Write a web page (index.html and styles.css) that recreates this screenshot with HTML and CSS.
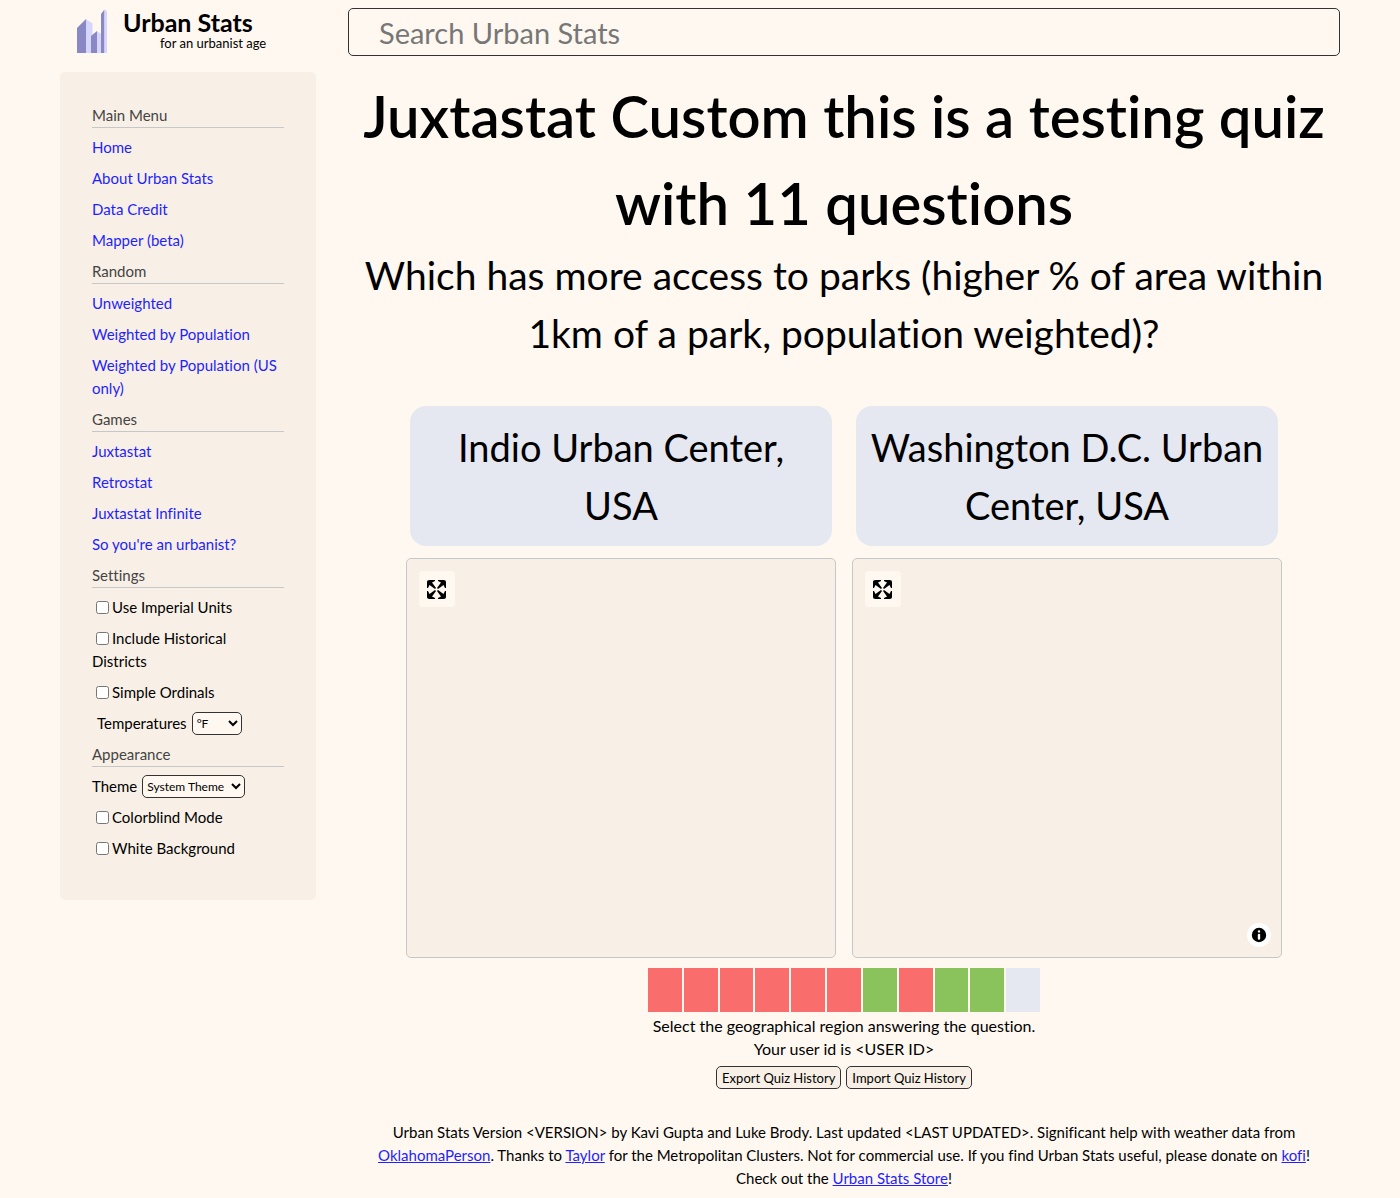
FILE: index.html
```html
<!DOCTYPE html>
<html lang="en">
<head>
<meta charset="utf-8">
<meta name="viewport" content="width=device-width, initial-scale=1">
<title>Juxtastat Custom</title>
<link rel="stylesheet" href="styles.css">
</head>
<body>
<div class="page">
  <header class="header">
    <a class="logo" href="#" aria-label="Urban Stats home">
      <svg class="logo-mark" viewBox="0 0 32 46" aria-hidden="true">
        <path fill="#8a88c4" d="M1 19L10 10V44H1Z"/>
        <path fill="#d5d5fd" d="M10 10L16.500 14.500V44H10Z"/>
        <path fill="#8a88c4" d="M15 27L21 22V44H15Z"/>
        <path fill="#d5d5fd" d="M21 22L25 25V44H21Z"/>
        <path fill="#8a88c4" d="M25 5L28.500 .5V44H25Z"/>
        <path fill="#d5d5fd" d="M28.500 .5L31 2.500V44H28.500Z"/>
      </svg>
      <span class="logo-text">
        <span class="logo-name">Urban Stats</span>
        <span class="logo-tag">for an urbanist age</span>
      </span>
    </a>
    <input class="search" type="text" placeholder="Search Urban Stats" aria-label="Search Urban Stats">
  </header>

  <div class="body">
    <nav class="sidebar">
      <h2 class="section">Main Menu</h2>
      <a href="#">Home</a>
      <a href="#">About Urban Stats</a>
      <a href="#">Data Credit</a>
      <a href="#">Mapper (beta)</a>
      <h2 class="section">Random</h2>
      <a href="#">Unweighted</a>
      <a href="#">Weighted by Population</a>
      <a href="#">Weighted by Population (US only)</a>
      <h2 class="section">Games</h2>
      <a href="#">Juxtastat</a>
      <a href="#">Retrostat</a>
      <a href="#">Juxtastat Infinite</a>
      <a href="#">So you're an urbanist?</a>
      <h2 class="section">Settings</h2>
      <div class="setting"><input type="checkbox" id="imperial"><label for="imperial">Use Imperial Units</label></div>
      <div class="setting"><input type="checkbox" id="historical"><label for="historical">Include Historical<br>Districts</label></div>
      <div class="setting"><input type="checkbox" id="ordinals"><label for="ordinals">Simple Ordinals</label></div>
      <div class="setting choice indent"><label for="temperature">Temperatures</label><select class="select-temperature" id="temperature"><option>°F</option><option>°C</option></select></div>
      <h2 class="section">Appearance</h2>
      <div class="setting choice"><label for="theme">Theme</label><select class="select-theme" id="theme"><option>System Theme</option><option>Light Mode</option><option>Dark Mode</option></select></div>
      <div class="setting"><input type="checkbox" id="colorblind"><label for="colorblind">Colorblind Mode</label></div>
      <div class="setting"><input type="checkbox" id="white"><label for="white">White Background</label></div>
    </nav>

    <main class="content">
      <h1 class="title">Juxtastat Custom this is a testing quiz with 11 questions</h1>
      <p class="question">Which has more access to parks (higher % of area within 1km of a park, population weighted)?</p>

      <div class="options">
        <div class="option">
          <button class="answer" type="button">Indio Urban Center,<br>USA</button>
          <div class="map">
            <button class="fullscreen" type="button" aria-label="Enter fullscreen">
              <svg viewBox="-3 -4 36 36" aria-hidden="true"><path id="expand" d="M24 16v5.500c0 1.750-.75 2.500-2.500 2.500H16v-1l3-1.500-4-5.500 1-1 5.500 4 1.500-3h1zM6 16l1.500 3 5.500-4 1 1-4 5.500 3 1.500v1H7.500C5.750 24 5 23.250 5 21.500V16h1zm7-11v1l-3 1.500 4 5.500-1 1-5.500-4L6 13H5V7.500C5 5.750 5.750 5 7.500 5H13zm11 2.500c0-1.750-.75-2.500-2.500-2.500H16v1l3 1.500-4 5.500 1 1 5.500-4 1.500 3h1V7.500z"/></svg>
            </button>
          </div>
        </div>
        <div class="option">
          <button class="answer" type="button">Washington D.C. Urban Center, USA</button>
          <div class="map">
            <button class="fullscreen" type="button" aria-label="Enter fullscreen">
              <svg viewBox="-3 -4 36 36" aria-hidden="true"><use href="#expand"/></svg>
            </button>
            <button class="attribution" type="button" aria-label="Map attribution">
              <svg viewBox="0 0 20 20" aria-hidden="true"><path fill-rule="evenodd" d="M4 10a6 6 0 1 0 12 0a6 6 0 1 0-12 0m5-3a1 1 0 1 0 2 0a1 1 0 1 0-2 0m0 3a1 1 0 1 1 2 0v3a1 1 0 1 1-2 0"/></svg>
            </button>
          </div>
        </div>
      </div>

      <div class="progress" role="img" aria-label="3 of 10 answered correctly">
        <span class="wrong"></span><span class="wrong"></span><span class="wrong"></span><span class="wrong"></span><span class="wrong"></span><span class="wrong"></span><span class="right"></span><span class="wrong"></span><span class="right"></span><span class="right"></span><span class="pending"></span>
      </div>

      <p class="note">Select the geographical region answering the question.</p>
      <p class="note">Your user id is &lt;USER ID&gt;</p>
      <div class="actions">
        <button class="small-button" type="button">Export Quiz History</button>
        <button class="small-button" type="button">Import Quiz History</button>
      </div>

      <footer class="footer">Urban Stats Version &lt;VERSION&gt; by Kavi Gupta and Luke Brody. Last updated &lt;LAST UPDATED&gt;. Significant help with weather data from <a href="#">OklahomaPerson</a>. Thanks to <a href="#">Taylor</a> for the Metropolitan Clusters. Not for commercial use. If you find Urban Stats useful, please donate on <a href="#">kofi</a>!<br>Check out the <a href="#">Urban Stats Store</a>!</footer>
    </main>
  </div>
</div>
</body>
</html>
```

FILE: styles.css
```css
* {
  box-sizing: border-box;
}

body {
  margin: 0;
  background: #fff8f0;
  color: #000;
  font: 15px/23px Lato, sans-serif;
  font-variant-ligatures: none;
}

h1, h2, p {
  margin: 0;
  font-weight: 400;
}

button, input, select {
  font-family: inherit;
  color: inherit;
}

a {
  color: #1f1fff;
}

.page {
  max-width: 1400px;
  margin: 0 auto;
  padding: 8px 60px;
}

.header {
  display: flex;
  gap: 32px;
  margin-bottom: 16px;
}

.logo {
  display: flex;
  flex: 0 0 256px;
  gap: 15px;
  height: 48px;
  padding-left: 16px;
  color: #000;
  text-decoration: none;
}

.logo-mark {
  width: 32px;
  height: 46px;
  margin-top: 1px;
}

.logo-text {
  display: flex;
  flex-direction: column;
}

.logo-name {
  font-size: 25px;
  font-weight: 700;
  line-height: 28px;
}

.logo-tag {
  padding-left: 37px;
  font-size: 13px;
  line-height: 15px;
}

.search {
  flex: 1;
  min-width: 0;
  height: 48px;
  padding: 0 30px;
  border: 1px solid #333;
  border-radius: 5px;
  background: #fff8f0;
  font-size: 29px;
}

.search::placeholder {
  color: #777;
}

.body {
  display: flex;
  align-items: flex-start;
  gap: 32px;
}

.sidebar {
  display: flex;
  flex: 0 0 256px;
  flex-direction: column;
  gap: 8px;
  padding: 32px 32px 40px;
  border-radius: 5px;
  background: #f8f0e6;
}

.sidebar a {
  text-decoration: none;
}

.section {
  border-bottom: 1px solid #c5c8c8;
  color: #444;
  font-size: 15px;
  line-height: 23px;
}

.setting input {
  margin: 3px 3px 3px 4px;
  vertical-align: -1px;
}

.choice {
  display: flex;
  gap: 5px;
}

.indent {
  padding-left: 5px;
}

select {
  height: 23px;
  padding: 0;
  border: 1px solid #333;
  border-radius: 5px;
  background: #fff8f0;
  font-size: 12px;
}

.select-temperature {
  width: 50px;
}

.select-theme {
  width: 103px;
}

.content {
  flex: 1;
  min-width: 0;
  text-align: center;
}

.title {
  font-size: 58px;
  font-weight: 600;
  line-height: 87px;
}

.question {
  font-size: 39px;
  line-height: 58px;
}

.options {
  display: flex;
  gap: 16px;
  max-width: 876px;
  margin: 44px auto 10px;
}

.option {
  display: flex;
  flex: 1;
  flex-direction: column;
  gap: 12px;
}

.answer {
  flex: 1;
  margin: 0 4px;
  padding: 12px 4px;
  border: 0;
  border-radius: 16px;
  background: #e5e8f0;
  font-size: 38px;
  line-height: 58px;
}

.map {
  position: relative;
  height: 400px;
  border: 1px solid #c5c8c8;
  border-radius: 5px;
  background: #f8f0e6;
}

.fullscreen {
  position: absolute;
  top: 12px;
  left: 12px;
  width: 36px;
  height: 36px;
  padding: 0;
  border: 0;
  border-radius: 4px;
  background: #fff8f0;
}

.attribution {
  position: absolute;
  right: 10px;
  bottom: 10px;
  width: 24px;
  height: 24px;
  padding: 0;
  border: 0;
  border-radius: 12px;
  background: #fff;
}

.map svg {
  display: block;
  width: 100%;
}

.progress {
  display: flex;
  gap: 2px;
  width: 392px;
  height: 44px;
  margin: 0 auto 2px;
}

.progress span {
  flex: 1;
}

.wrong {
  background: #f96d6d;
}

.right {
  background: #8ac35c;
}

.pending {
  background: #e5e8f0;
}

.note {
  font-size: 16px;
}

.actions {
  display: flex;
  justify-content: center;
  gap: 5px;
  margin: 6px 0 32px;
}

.small-button {
  height: 23px;
  padding: 0 5px;
  border: 1px solid #333;
  border-radius: 5px;
  background: #f8f0e6;
  font-size: 13px;
}
```
